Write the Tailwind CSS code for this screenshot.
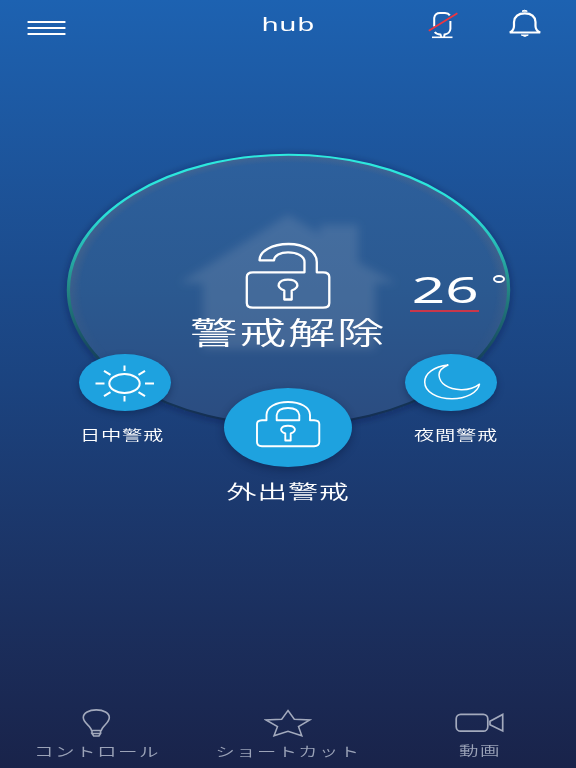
<!DOCTYPE html>
<html lang="ja">
<head>
    <meta charset="UTF-8">
    <meta name="viewport" content="width=device-width, initial-scale=1.0">
    <title>hub</title>
    <script src="https://cdn.jsdelivr.net/npm/@tailwindcss/browser@4"></script>
</head>
<body class="overflow-hidden text-white font-['Noto_Sans','Noto_Sans_CJK_JP',sans-serif]">

    <div class="relative w-[576px] h-[768px] flex flex-col overflow-hidden bg-linear-to-b from-[#1d62b1] via-[#1b437f] to-[#19234a]">

        <!-- Header -->
        <header class="h-12 shrink-0 grid grid-cols-3">
            <button class="pl-[27px] pt-[20px] justify-self-start self-start">
                <svg class="block" width="39" height="16" viewBox="0 0 39 16" stroke="#fff" stroke-width="2.2" stroke-linecap="round">
                    <path d="M1.4 2H37.6M1.4 8H37.6M1.4 14H37.6"/>
                </svg>
            </button>
            <h1 class="justify-self-center mt-[12px] text-[18px] leading-[24px] tracking-[0.4px] scale-x-[1.55]">hub</h1>
            <div class="flex justify-end items-start gap-[50px] pr-[34px] pt-[9px]">
                <svg class="mt-[3px]" width="30" height="27" viewBox="428 12 30 27" fill="none" stroke="#fff" stroke-width="2">
                    <path d="M434.2 26.6V18Q435 13 440 13H445Q448.4 13.2 449.8 15.4M450.4 21V29Q449.8 33.8 444.6 34.4L444 37M434.8 32Q436.3 34.2 440.5 34.6L441.3 37"/>
                    <path d="M432 37.3H452.5" stroke-width="1.6"/>
                    <path d="M428.8 30.8L457.4 13.3" stroke="#f0353f" stroke-width="1.7"/>
                </svg>
                <svg width="34" height="29" viewBox="508 9 34 29" fill="none" stroke="#fff" stroke-width="2.2">
                    <path d="M509.8 32.5Q514 30.5 514 26V22Q514.8 13.4 524.8 13.4T535.5 22V26Q535.5 30.5 540.2 32.5Z"/>
                    <path d="M522 11.2Q524.6 9.2 527.3 11.2ZM521.3 35H528.3Q525 37.8 521.3 35Z" fill="#fff" stroke-width="1"/>
                </svg>
            </div>
        </header>

        <!-- Status dial -->
        <main class="relative flex-1">
            <svg class="absolute left-0 top-0" width="576" height="420" viewBox="0 48 576 420" fill="none">
                <defs>
                    <linearGradient id="ring" x1="0" y1="-136" x2="0" y2="136" gradientUnits="userSpaceOnUse">
                        <stop offset="0" stop-color="#2deadf"/>
                        <stop offset=".22" stop-color="#2ae0d8"/>
                        <stop offset=".5" stop-color="#238683"/>
                        <stop offset=".72" stop-color="#17485f"/>
                        <stop offset="1" stop-color="#142c52"/>
                    </linearGradient>
                    <linearGradient id="disc" x1="0" y1="154" x2="0" y2="426" gradientUnits="userSpaceOnUse">
                        <stop offset="0" stop-color="#2d609d"/>
                        <stop offset=".5" stop-color="#2b5990"/>
                        <stop offset="1" stop-color="#2b4c80"/>
                    </linearGradient>
                    <linearGradient id="rimFade" x1="0" y1="154" x2="0" y2="426" gradientUnits="userSpaceOnUse">
                        <stop offset=".45" stop-color="#fff"/>
                        <stop offset=".75" stop-color="#000"/>
                    </linearGradient>
                    <mask id="rimMask"><rect width="576" height="470" fill="url(#rimFade)"/></mask>
                    <radialGradient id="rim">
                        <stop offset=".94" stop-color="#697080" stop-opacity="0"/>
                        <stop offset="1" stop-color="#697080" stop-opacity=".36"/>
                    </radialGradient>
                    <filter id="glow" x="-10%" y="-10%" width="120%" height="120%"><feGaussianBlur stdDeviation="3"/></filter>
                    <filter id="soft" x="-10%" y="-10%" width="120%" height="120%"><feGaussianBlur stdDeviation="4.5"/></filter>
                </defs>
                <ellipse cx="288.5" cy="291" rx="221" ry="135.5" stroke="#08183a" stroke-opacity=".4" stroke-width="4" filter="url(#glow)"/>
                <ellipse cx="288.5" cy="290" rx="220.5" ry="135" fill="url(#disc)"/>
                <ellipse cx="288.5" cy="290" rx="220.5" ry="135" fill="url(#rim)" mask="url(#rimMask)"/>
                <path d="M288 215L320 234V225H358V262L396 283H375V349H203V283H180Z" fill="#95a5bd" fill-opacity=".23" filter="url(#soft)"/>
                <circle r="135.2" transform="translate(288.5 290) scale(1.628 1)" stroke="url(#ring)" stroke-width="2"/>

                <!-- open padlock -->
                <g stroke="#fff" stroke-width="2.3" stroke-linejoin="round">
                    <path d="M304.5 272.3H253Q246.8 272.3 246.8 277V303Q246.8 307.7 253 307.7H323Q329.3 307.7 329.3 303V277Q329.3 272.3 323 272.3H316.8V262C316.8 251.5 304 244 288.5 244C272 244 259.5 251 259.5 260.3H274C274.5 255.5 280 252.3 288 252.3C297 252.3 304.5 256 304.5 262Z"/>
                    <path d="M284.3 299.5V290.5C274.5 287 278.5 279.7 288 279.7S301.5 287 291.7 290.5V299.5Z"/>
                </g>
            </svg>

            <p class="absolute left-[223.5px] top-[260px] w-32 text-[31px] leading-[48px] tracking-[1px] font-[350] whitespace-nowrap scale-x-[1.53]">警戒解除</p>

            <div class="absolute left-[410px] top-[216px] w-[69px] h-[48px] border-b-2 border-[#c9374a] flex justify-center">
                <span class="text-[37px] leading-[50px] ml-px scale-x-[1.58]">26</span>
            </div>
            <span class="absolute left-[493px] top-[227px] w-[12px] h-[8px] rounded-[50%] border-2 border-white"></span>

            <!-- Day mode -->
            <button class="absolute left-[78.5px] top-[305.5px] w-[92px] h-[57px] rounded-[50%] bg-[#1ea2df] shadow-[0_3px_7px_rgba(8,25,60,.4)]">
                <svg class="block" width="92" height="57" viewBox="0 0 92 57" fill="none" stroke="#fff" stroke-width="2">
                    <ellipse cx="45.5" cy="29.5" rx="15.2" ry="9.4"/>
                    <path d="M45.5 11.5V17M45.5 42V47.5M16.5 29.5H25.5M66 29.5H75M25 16.8L31.5 20.8M66 16.8L59.5 20.8M25 42.2L31.5 38.2M66 42.2L59.5 38.2"/>
                </svg>
            </button>
            <p class="absolute left-[93.5px] top-[376.5px] w-14 text-[13.5px] leading-[21px] tracking-[0.5px] font-[350] whitespace-nowrap scale-x-[1.5]">日中警戒</p>

            <!-- Away mode -->
            <button class="absolute left-[224px] top-[340px] w-[128px] h-[79px] rounded-[50%] bg-[#1ea2df] shadow-[0_3px_8px_rgba(8,25,60,.45)]">
                <svg class="block" width="128" height="79" viewBox="224 388 128 79" fill="none" stroke="#fff" stroke-width="1.9" stroke-linejoin="round">
                    <path d="M262 420.3H266.5V415C266.5 407 276 402 288 402S310 407 310 415V420.3H314Q319.3 420.5 319.3 424V442Q319.3 446 314 446.3H262Q257 446 257 442V424Q257 420.5 262 420.3Z"/>
                    <path d="M276.7 420.3V415Q277.5 408 288 408T299.3 415V420.3Z"/>
                    <path d="M285.3 440.5V433.5C278 431 281 425.8 288 425.8S298 431 290.7 433.5V440.5Z"/>
                </svg>
            </button>
            <p class="absolute left-[248px] top-[429.5px] w-20 text-[19.5px] leading-[28px] tracking-[0.5px] font-[350] whitespace-nowrap scale-x-[1.54]">外出警戒</p>

            <!-- Night mode -->
            <button class="absolute left-[405px] top-[305.5px] w-[92px] h-[57px] rounded-[50%] bg-[#1ea2df] shadow-[0_3px_7px_rgba(8,25,60,.4)]">
                <svg class="block" width="92" height="57" viewBox="405 353.5 92 57" fill="none" stroke="#fff" stroke-width="1.5" stroke-linejoin="round">
                    <path d="M448 364.5C434 366 424.7 373 424.7 381.5C424.7 391.5 437 398.3 452 398.3C466 398.3 478 392 479.5 383.7C474 388 469 389.5 461 389.3C448 389 439.5 383 439 374.5C439 370.5 442 367 448 364.5Z"/>
                </svg>
            </button>
            <p class="absolute left-[427.5px] top-[376.5px] w-14 text-[13.5px] leading-[21px] tracking-[0.5px] font-[350] whitespace-nowrap scale-x-[1.5]">夜間警戒</p>
        </main>

        <!-- Bottom tabs -->
        <nav class="h-[66px] shrink-0 grid grid-cols-3 text-[13px] leading-[20px] tracking-[1px] font-[350] text-[#9ba3b8]">
            <a class="flex flex-col items-center gap-[3px] pt-[6px]">
                <svg width="30" height="30" viewBox="81 708 30 30" fill="none" stroke="#a3aabd" stroke-width="1.6">
                    <path d="M91.5 730.5C91 726 83.3 723 83.3 717.5C83.3 713 89 709.9 96.3 709.9S109.3 713 109.3 717.5C109.3 723 102 726 101.3 730.5ZM92 733.5H100.5L99 736H93.7ZM92 730.5V733.5M100.5 730.5V733.5"/>
                </svg>
                <span class="whitespace-nowrap ml-[3px] scale-x-[1.5]">コントロール</span>
            </a>
            <a class="flex flex-col items-center gap-[3px] pt-[6px]">
                <svg width="48" height="30" viewBox="264 708 48 30" fill="none" stroke="#a3aabd" stroke-width="1.5">
                    <path d="M288 710.5L294.3 719.2L309.7 720L298.5 726.5L301.8 735.7L288 731.2L274 735.7L277.5 726.5L266 720L281.7 719.2Z"/>
                </svg>
                <span class="whitespace-nowrap scale-x-[1.48]">ショートカット</span>
            </a>
            <a class="flex flex-col items-center gap-[3px] pt-[6px]">
                <svg width="52" height="30" viewBox="454 708 52 30" fill="none" stroke="#a3aabd" stroke-width="1.7">
                    <rect x="456.2" y="714.4" width="31.6" height="16.8" rx="4.5"/>
                    <path d="M490 721.2L502.7 714.5V731L490 724.8Z"/>
                </svg>
                <span class="whitespace-nowrap -mt-px scale-x-[1.5]">動画</span>
            </a>
        </nav>
    </div>

</body>
</html>
